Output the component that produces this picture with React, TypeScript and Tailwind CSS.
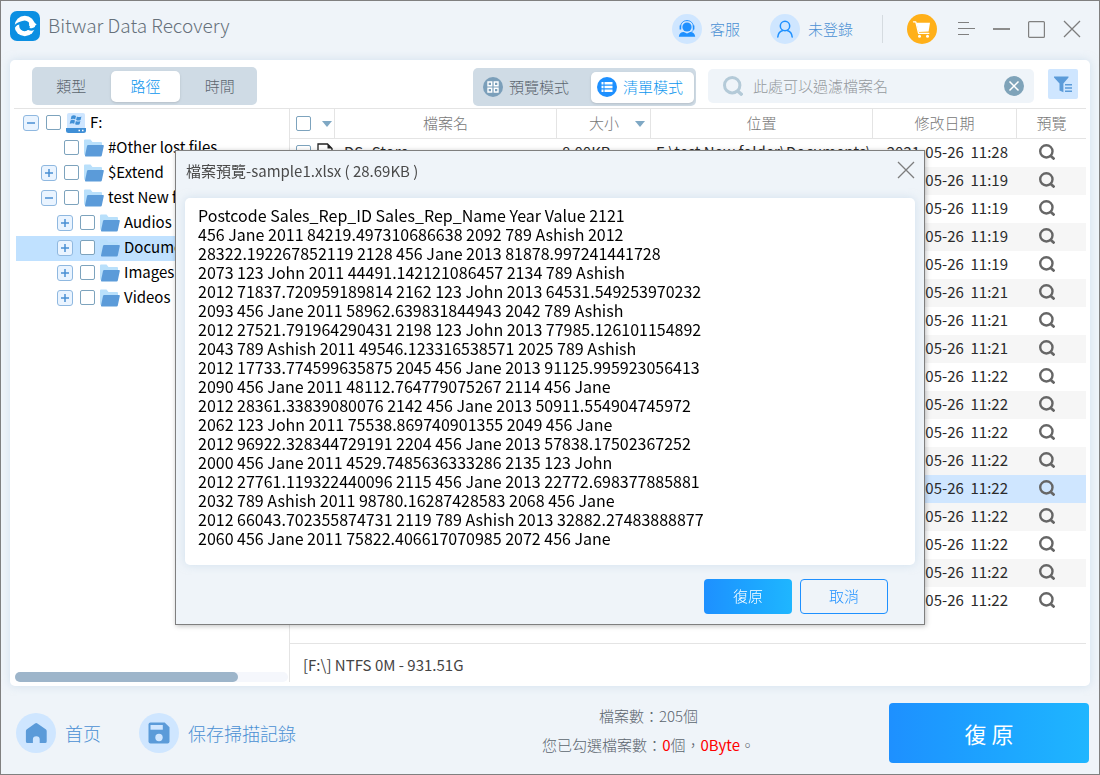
import { useState } from "react";
import type { ReactNode } from "react";
import clsx from "clsx";

interface TreeItem {
  label: string;
  level: number;
  expander?: "plus" | "minus";
  drive?: boolean;
  selected?: boolean;
}

interface FileRow {
  name?: string;
  size?: string;
  path?: string;
  date: string;
  time: string;
  selected?: boolean;
}

const tree: TreeItem[] = [
  { label: "F:", level: 0, expander: "minus", drive: true },
  { label: "#Other lost files", level: 1 },
  { label: "$Extend", level: 1, expander: "plus" },
  { label: "test New folder", level: 1, expander: "minus" },
  { label: "Audios", level: 2, expander: "plus" },
  { label: "Documents", level: 2, expander: "plus", selected: true },
  { label: "Images", level: 2, expander: "plus" },
  { label: "Videos", level: 2, expander: "plus" },
];

const times = [
  "11:28", "11:19", "11:19", "11:19", "11:19", "11:21", "11:21", "11:21", "11:22",
  "11:22", "11:22", "11:22", "11:22", "11:22", "11:22", "11:22", "11:22",
];

const files: FileRow[] = times.map((time, index) => ({
  date: "2021-05-26",
  time,
  selected: index === 12,
  ...(index === 0 && { name: "DS_Store", size: "8.00KB", path: "F:\\test New folder\\Documents\\" }),
}));

const previewText = `Postcode Sales_Rep_ID Sales_Rep_Name Year Value 2121
456 Jane 2011 84219.497310686638 2092 789 Ashish 2012
28322.192267852119 2128 456 Jane 2013 81878.997241441728
2073 123 John 2011 44491.142121086457 2134 789 Ashish
2012 71837.720959189814 2162 123 John 2013 64531.549253970232
2093 456 Jane 2011 58962.639831844943 2042 789 Ashish
2012 27521.791964290431 2198 123 John 2013 77985.126101154892
2043 789 Ashish 2011 49546.123316538571 2025 789 Ashish
2012 17733.774599635875 2045 456 Jane 2013 91125.995923056413
2090 456 Jane 2011 48112.764779075267 2114 456 Jane
2012 28361.33839080076 2142 456 Jane 2013 50911.554904745972
2062 123 John 2011 75538.869740901355 2049 456 Jane
2012 96922.328344729191 2204 456 Jane 2013 57838.17502367252
2000 456 Jane 2011 4529.7485636333286 2135 123 John
2012 27761.119322440096 2115 456 Jane 2013 22772.698377885881
2032 789 Ashish 2011 98780.16287428583 2068 456 Jane
2012 66043.702355874731 2119 789 Ashish 2013 32882.27483888877
2060 456 Jane 2011 75822.406617070985 2072 456 Jane`;

const Logo = () => (
  <svg viewBox="0 0 30 30" className="size-[30px]" aria-hidden="true">
    <rect width="30" height="30" rx="7" fill="#0b8fe2" />
    <circle cx="14.800" cy="15" r="10.200" fill="#fff" />
    {/* pupil and the two cuts that split the ring into a swirl */}
    <circle cx="14.600" cy="14.800" r="5.400" fill="#0b8fe2" />
    <path d="M3.500 15.500c2.600-3.600 6-5.200 10.300-5.200l-3 3.200c-2.600-.2-4.600.9-6 3.500z" fill="#0b8fe2" />
    <path d="M18 16.800c2.900.8 5.300.3 7.600-1.400l.2 2.800c-2.200 1.600-4.800 2-8 .6z" fill="#0b8fe2" />
    <path d="M19 11.500h5.400l2.200 1.900c-2.400 2.300-4.900 2.700-7.400 1.600z" fill="#fff" />
  </svg>
);

const ServiceIcon = () => (
  <svg viewBox="0 0 30 30" className="size-[30px]" aria-hidden="true">
    <circle cx="15" cy="15" r="15" fill="#cfe6ff" />
    <circle cx="15" cy="13" r="4.600" fill="#1e90ff" />
    <path d="M8.500 13.500C8.500 9 11.300 6.600 15 6.600s6.500 2.400 6.500 6.900" fill="none" stroke="#1e90ff" strokeWidth="1" />
    <path d="M7.600 11.500h1.600v4H7.600zM20.800 11.500h1.600v4h-1.600z" fill="#1e90ff" />
    <path d="M21.500 15c-.4 2-1.700 3.400-3.700 3.900" fill="none" stroke="#1e90ff" strokeWidth=".8" />
    <path d="M6.800 22.800c.3-3 2-4.800 5-4.800l3.200 1.500 3.200-1.500c3 0 4.700 1.800 5 4.800z" fill="#1e90ff" />
  </svg>
);

const UserIcon = () => (
  <svg viewBox="0 0 30 30" className="size-[30px]" aria-hidden="true">
    <circle cx="15" cy="15" r="15" fill="#cfe6ff" />
    <g fill="none" stroke="#1e90ff" strokeWidth="1.500" strokeLinecap="round">
      <circle cx="15" cy="12" r="4.700" />
      <path d="M7.800 23c.3-3.600 2-5.600 5-6.500M22.200 23c-.3-3.600-2-5.600-5-6.500" />
    </g>
  </svg>
);

const CartIcon = () => (
  <svg viewBox="0 0 30 30" className="size-[30px]" aria-hidden="true">
    <circle cx="15" cy="15" r="15" fill="#ffb01a" />
    <path d="M6.500 7.800h2.300l2.800 11.600h10.200" fill="none" stroke="#fff" strokeWidth="1.300" strokeLinecap="round" strokeLinejoin="round" />
    <path d="M9.300 8.800H23l-1.400 8.700-10 .6z" fill="#fff" />
    <circle cx="12.500" cy="22.300" r="1.500" fill="#fff" />
    <circle cx="20.500" cy="22.300" r="1.500" fill="#fff" />
  </svg>
);

const CloseIcon = () => (
  <svg viewBox="0 0 18 18" className="size-[18px]" aria-hidden="true">
    <path d="M1 1l16 16M17 1 1 17" stroke="#7d7d7d" strokeWidth="1.300" />
  </svg>
);

const SearchIcon = ({ className }: { className: string }) => (
  <svg viewBox="0 0 20 20" className={className} fill="none" stroke="currentColor" strokeWidth="3" aria-hidden="true">
    <circle cx="9.200" cy="9.200" r="7.700" />
    <path d="M13.800 14.200l5.600 5" strokeWidth="3.400" />
  </svg>
);

const GridIcon = () => (
  <svg viewBox="0 0 20 20" className="size-5" aria-hidden="true">
    <circle cx="10" cy="10" r="10" fill="#7b9fba" />
    <g fill="none" stroke="#fff" strokeWidth="1.400">
      <path d="M5 5h3.700v3.700H5zM11.300 5H15v3.700h-3.700zM5 11.300h3.700V15H5zM11.300 11.300H15V15h-3.700z" />
    </g>
  </svg>
);

const ListIcon = () => (
  <svg viewBox="0 0 20 20" className="size-5" aria-hidden="true">
    <circle cx="10" cy="10" r="10" fill="#1e90ff" />
    <path d="M4.500 5h2v2.400h-2zM7.500 5h8v2.400h-8zM4.500 8.800h2v2.400h-2zM7.500 8.800h8v2.400h-8zM4.500 12.600h2V15h-2zM7.500 12.600h8V15h-8z" fill="#fff" />
  </svg>
);

const FilterIcon = () => (
  <svg viewBox="0 0 18 17" className="h-[17px] w-[18px]" aria-hidden="true">
    <path d="M0 .5h14.500v1L9.400 7.500v8.800L5.500 14.500v-7L0 1.500z" fill="#5b9bd9" />
    <path d="M11 8.800h7M11 12h7M11 15.200h7" stroke="#5b9bd9" strokeWidth="1.500" />
  </svg>
);

const FolderIcon = () => (
  <svg viewBox="0 0 20 18" className="h-[18px] w-5" aria-hidden="true">
    <path d="M0 1.500Q0 .5 1 .5h5.500L8.500 3H17q1 0 1 1v6H3L1.500 16.500Q0 16 0 14z" fill="#b9e0fb" />
    <path d="M4.200 6H19q1 0 .8 1l-2 9.500q-.2 1-1.200 1H1.800q-1 0-.8-1L3 7q.2-1 1.200-1z" fill="#5b9bd9" />
  </svg>
);

const DriveIcon = () => (
  <svg viewBox="0 0 20 20" className="size-5" aria-hidden="true">
    <rect x="1" width="18" height="17" rx="2" fill="#cfe6ff" />
    <path d="M0 15h20v2.500q0 2.500-2.500 2.500h-15Q0 20 0 17.500z" fill="#3f8fd6" />
    <path d="M12.500 17.500h1.500M16 17.500h1.500" stroke="#fff" strokeWidth="1.300" />
    <path d="M5.500 3q2.500-1.500 4.500 0L9.200 6.500q-2-1.300-4.500 0zM10.900 3.400q2.200 1 4.500 0l-.8 3.500q-2.300 1-4.500 0zM4.500 7.500q2.200-1.300 4.500 0l-.8 3.300q-2-1.200-4.500 0zM9.900 7.900q2.200 1 4.500 0l-.8 3.300q-2.300 1-4.500 0z" fill="#3f8fd6" />
  </svg>
);

const FileIcon = () => (
  <svg viewBox="0 0 16 18" className="h-[18px] w-4" aria-hidden="true">
    <path d="M1 1h9.500L15 5.500V17H1z" fill="#fff" stroke="#222" strokeWidth="1.300" />
    <path d="M10.500 1v4.500H15z" fill="#222" />
  </svg>
);

const HomeIcon = () => (
  <svg viewBox="0 0 40 40" className="size-10" aria-hidden="true">
    <circle cx="20" cy="20" r="20" fill="#cfe6ff" />
    <path d="M19 10.500q1.200-.8 2.400 0l8.300 5.700q1 .7 1 2V28.500q0 1.500-1.500 1.500h-5.500v-3.800q0-3-3.400-3t-3.400 3V30h-5.500q-1.500 0-1.500-1.500V18.200q0-1.300 1-2z" fill="#5b9bd9" />
  </svg>
);

const SaveIcon = () => (
  <svg viewBox="0 0 40 40" className="size-10" aria-hidden="true">
    <circle cx="20" cy="20" r="20" fill="#cfe6ff" />
    <path d="M11.500 9.500h14.200l4.800 4.800v14.200q0 2-2 2h-17q-2 0-2-2v-17q0-2 2-2z" fill="#5b9bd9" />
    <path d="M11.500 12h12.300v4.700H11.500z" fill="#cfe6ff" />
    <circle cx="20" cy="24.500" r="3.700" fill="#cfe6ff" />
  </svg>
);

const Caret = () => (
  <svg viewBox="0 0 10 6" className="h-[6px] w-[10px]" aria-hidden="true">
    <path d="M0 0h10L5 6z" fill="#7fa8c4" />
  </svg>
);

const Checkbox = ({ label }: { label: string }) => (
  <input
    type="checkbox"
    aria-label={label}
    className="block size-[15px] shrink-0 appearance-none rounded-[2px] border border-[#7da3bd] bg-white checked:bg-[#5b9bd9]"
  />
);

const Expander = ({ kind }: { kind: "plus" | "minus" }) => (
  <button
    type="button"
    aria-label={kind === "plus" ? "展開" : "收合"}
    className="size-4 shrink-0 rounded-[3px] border border-[#8fb8e0] bg-[#eaf4ff]"
  >
    <svg viewBox="0 0 14 14" className="size-[14px]" aria-hidden="true">
      <path d={kind === "plus" ? "M3 7h8M7 3v8" : "M3 7h8"} stroke="#4a8fd3" strokeWidth="1.500" />
    </svg>
  </button>
);

const TreeRow = ({ item }: { item: TreeItem }) => (
  <li
    className={clsx(
      "ml-[2px] flex h-[25px] items-center overflow-hidden pb-[2px]",
      item.level === 0 && "pl-[7px]",
      item.level === 1 && "pl-[25px]",
      item.level === 2 && "pl-[41px]",
      item.selected && "bg-[#c0e1ff]",
    )}
  >
    <span className="mr-[7px] flex size-4 shrink-0">{item.expander && <Expander kind={item.expander} />}</span>
    <Checkbox label={item.label} />
    <span className="mr-1 ml-[5px] shrink-0">{item.drive ? <DriveIcon /> : <FolderIcon />}</span>
    <span className="text-[15px] whitespace-nowrap text-black">{item.label}</span>
  </li>
);

interface TabButtonProps {
  active: boolean;
  onClick: () => void;
  className?: string;
  children: ReactNode;
}

const TabButton = ({ active, onClick, className, children }: TabButtonProps) => (
  <button
    type="button"
    aria-pressed={active}
    onClick={onClick}
    className={clsx(
      "flex h-[31px] items-center rounded-[5px] text-[15px] font-light",
      active ? "bg-white text-[#0d96ee] shadow-sm" : "text-[#5c666f]",
      className,
    )}
  >
    {children}
  </button>
);

const Header = () => (
  <header className="flex h-[59px] shrink-0 items-start justify-between pr-[18px] pl-[9px]">
    <div className="flex items-start gap-2 pt-[10px]">
      <Logo />
      <h1 className="text-[19px] leading-7 font-light text-[#66717b]">Bitwar Data Recovery</h1>
    </div>
    <div className="flex items-center pt-[13px]">
      <button type="button" className="flex items-center gap-2 text-[15px] font-light text-[#4a90d4]">
        <ServiceIcon />
        客服
      </button>
      <button type="button" className="ml-[30px] flex items-center gap-2 text-[15px] font-light text-[#4a90d4]">
        <UserIcon />
        未登錄
      </button>
      <span className="mr-6 ml-[29px] h-7 w-px bg-[#d5dbe0]" />
      <button type="button" aria-label="購物車">
        <CartIcon />
      </button>
      <div className="ml-[21px] flex items-center gap-[18px]">
        <button type="button" aria-label="選單">
          <svg viewBox="0 0 17 14" className="h-[14px] w-[17px]" fill="none" stroke="#808080" aria-hidden="true">
            <path d="M0 .5h11M0 6.500h17M0 12.500h11" />
          </svg>
        </button>
        <button type="button" aria-label="最小化">
          <svg viewBox="0 0 17 2" className="h-[2px] w-[17px]" aria-hidden="true">
            <path d="M0 1h17" stroke="#8c8c8c" strokeWidth="2" />
          </svg>
        </button>
        <button type="button" aria-label="最大化">
          <svg viewBox="0 0 17 17" className="size-[17px]" fill="none" stroke="#808080" aria-hidden="true">
            <rect x=".6" y=".6" width="15.800" height="15.800" rx="1" strokeWidth="1.200" />
          </svg>
        </button>
        <button type="button" aria-label="關閉">
          <CloseIcon />
        </button>
      </div>
    </div>
  </header>
);

const Toolbar = () => {
  const [tab, setTab] = useState("路徑");
  const [mode, setMode] = useState("list");
  const [query, setQuery] = useState("");

  return (
    <div className="flex h-12 items-start justify-between pr-3 pl-[22px]">
      <div className="mt-[7px] grid h-[38px] w-[225px] grid-cols-3 items-center rounded-[5px] bg-[#cfdbe5] pl-[2px]">
        {["類型", "路徑", "時間"].map((name) => (
          <TabButton key={name} active={tab === name} onClick={() => setTab(name)} className="mx-[3px] justify-center">
            {name}
          </TabButton>
        ))}
      </div>
      <div className="flex items-start">
        <div className="mt-2 flex h-[38px] w-[223px] items-center justify-between rounded-[5px] bg-[#cfdbe5] pr-[2px] pl-1">
          <TabButton active={mode === "preview"} onClick={() => setMode("preview")} className="gap-[6px] px-[6px]">
            <GridIcon />
            預覽模式
          </TabButton>
          <TabButton active={mode === "list"} onClick={() => setMode("list")} className="w-[103px] gap-[6px] px-[6px]">
            <ListIcon />
            清單模式
          </TabButton>
        </div>
        <div className="mt-[9px] ml-3 flex h-[34px] w-[326px] items-center rounded-[5px] bg-[#eff4f9] pr-[10px] pl-[15px]">
          <SearchIcon className="size-5 text-[#b4cad8]" />
          <input
            type="text"
            aria-label="此處可以過濾檔案名"
            placeholder="此處可以過濾檔案名"
            value={query}
            onChange={(e) => setQuery(e.target.value)}
            className="ml-[10px] min-w-0 flex-1 bg-transparent text-[15px] font-light text-[#555] outline-none placeholder:text-[#959a9e]"
          />
          <button type="button" aria-label="清除" onClick={() => setQuery("")}>
            <svg viewBox="0 0 20 20" className="size-5" aria-hidden="true">
              <circle cx="10" cy="10" r="10" fill="#7fa3b9" />
              <path d="M5.500 5.500l9 9M14.500 5.500l-9 9" stroke="#fff" strokeWidth="1.500" />
            </svg>
          </button>
        </div>
        <button
          type="button"
          aria-label="篩選"
          className="mt-[9px] ml-[14px] flex size-[30px] items-center justify-center rounded-[2px] bg-[#cfe6ff]"
        >
          <FilterIcon />
        </button>
      </div>
    </div>
  );
};

const FileTable = () => {
  const th = "h-[30px] border-b border-[#e4e4e4] p-0 text-[15px] font-light text-[#777]";
  const td = "h-7 p-0 pb-[2px]";

  return (
    <table className="w-full table-fixed border-separate border-spacing-0 text-[15px] text-[#2b2b2b]">
      <colgroup>
        <col className="w-[45px]" />
        <col />
        <col className="w-[94px]" />
        <col />
        <col className="w-[144px]" />
        <col className="w-[69px]" />
      </colgroup>
      <thead>
        <tr>
          <th className={clsx(th, "border-r")}>
            <span className="flex items-center justify-between pr-[2px] pl-[6px]">
              <Checkbox label="全選" />
              <Caret />
            </span>
          </th>
          <th className={clsx(th, "border-r")}>檔案名</th>
          <th className={clsx(th, "border-r")}>
            <span className="flex items-center justify-end gap-4 pr-[5px]">
              大小
              <Caret />
            </span>
          </th>
          <th className={clsx(th, "border-r")}>位置</th>
          <th className={clsx(th, "border-r")}>修改日期</th>
          <th className={th}>預覽</th>
        </tr>
      </thead>
      <tbody>
        {files.map((file, index) => (
          <tr key={index} className={clsx(file.selected ? "bg-[#cfe6ff]" : index % 2 === 1 && "bg-[#f6f6f6]")}>
            <td className={td}>
              <span className="flex items-center gap-[6px] pl-[6px]">
                <Checkbox label={`檔案 ${index + 1}`} />
                <FileIcon />
              </span>
            </td>
            <td className={clsx(td, "pl-[9px]")}>{file.name}</td>
            <td className={clsx(td, "pl-[5px]")}>{file.size}</td>
            <td className={clsx(td, "overflow-hidden pl-[5px] whitespace-nowrap")}>{file.path}</td>
            <td className={clsx(td, "pr-[9px] text-right whitespace-pre")}>{`${file.date}  ${file.time}`}</td>
            <td className={td}>
              <button type="button" aria-label="預覽" className="ml-[22px] block">
                <SearchIcon className="size-4 text-[#666]" />
              </button>
            </td>
          </tr>
        ))}
      </tbody>
    </table>
  );
};

const PreviewDialog = ({ onClose }: { onClose: () => void }) => (
  <div className="fixed inset-0 grid place-items-center">
    <section
      role="dialog"
      aria-labelledby="preview-title"
      className="w-[750px] max-w-full border border-[#7f7f7f] bg-[#eff4f9] px-[9px] pb-[10px] shadow-[1px_1px_5px_rgba(0,0,0,0.25)]"
    >
      <div className="flex h-[47px] items-start justify-between pt-[10px] pl-[1px]">
        <h2 id="preview-title" className="text-[15px] leading-5 text-[#4a4a4a]">
          檔案預覽-sample1.xlsx ( 28.69KB )
        </h2>
        <button type="button" aria-label="關閉預覽" onClick={onClose}>
          <CloseIcon />
        </button>
      </div>
      <div className="rounded-[5px] bg-white px-[13px] pt-2 pb-[17px] shadow-[0_0_8px_rgba(180,205,228,0.5)]">
        <p className="text-base leading-[19px] whitespace-pre-line text-black">{previewText}</p>
      </div>
      <div className="mt-[14px] flex justify-end gap-2 pr-[27px]">
        <button
          type="button"
          className="h-[35px] w-[88px] rounded-[4px] bg-linear-to-r from-[#1e90ff] to-[#1fb6ff] text-[15px] font-light text-white"
        >
          復原
        </button>
        <button
          type="button"
          onClick={onClose}
          className="h-[35px] w-[88px] rounded-[4px] border border-[#1e90ff] text-[15px] font-light text-[#1e90ff]"
        >
          取消
        </button>
      </div>
    </section>
  </div>
);

const Footer = () => (
  <footer className="flex h-[88px] shrink-0 items-center pt-[6px] pr-[10px] pl-[15px]">
    <div className="flex items-center gap-[38px] text-lg font-light text-[#4a90d4]">
      <button type="button" className="flex items-center gap-[9px]">
        <HomeIcon />
        首页
      </button>
      <button type="button" className="flex items-center gap-[9px]">
        <SaveIcon />
        保存掃描記錄
      </button>
    </div>
    <div className="mr-[134px] ml-auto pb-[6px] text-center text-[15px] leading-[29px] font-light text-[#5c666f]">
      <p>檔案數：205個</p>
      <p>
        您已勾選檔案數：<span className="font-normal text-[#f00]">0</span>個，
        <span className="font-normal text-[#f00]">0Byte</span>。
      </p>
    </div>
    <button
      type="button"
      className="h-[60px] w-[200px] rounded-[4px] bg-linear-to-r from-[#1e90ff] to-[#1fb6ff] text-[22px] text-white"
    >
      復 原
    </button>
  </footer>
);

export default function App() {
  const [previewOpen, setPreviewOpen] = useState(true);

  return (
    <div className="flex min-h-screen flex-col border border-[#808080] bg-[#eff4f9] font-['Noto_Sans_CJK_TC',sans-serif]">
      <Header />
      <main className="mx-[9px] flex flex-1 flex-col rounded-[5px] bg-white shadow-[0_0_8px_rgba(180,205,228,0.5)]">
        <Toolbar />
        <div className="mx-1 mb-1 flex flex-1 border-t border-[#e4e4e4]">
          <aside className="flex w-[276px] shrink-0 flex-col justify-between border-r border-[#e4e4e4] pt-[2px]">
            <ul>
              {tree.map((item) => (
                <TreeRow key={item.label} item={item} />
              ))}
            </ul>
            <div className="mx-px h-[10px] rounded-full bg-[#f5f7fc]">
              <div className="h-full w-[223px] rounded-full bg-[#9db5ca]" />
            </div>
          </aside>
          <div className="flex min-w-0 flex-1 flex-col justify-between">
            <FileTable />
            <p className="h-[39px] border-t border-[#e4e4e4] pl-[13px] text-[15px] leading-[42px] text-[#444]">
              [F:\] NTFS 0M - 931.51G
            </p>
          </div>
        </div>
      </main>
      <Footer />
      {previewOpen && <PreviewDialog onClose={() => setPreviewOpen(false)} />}
    </div>
  );
}
